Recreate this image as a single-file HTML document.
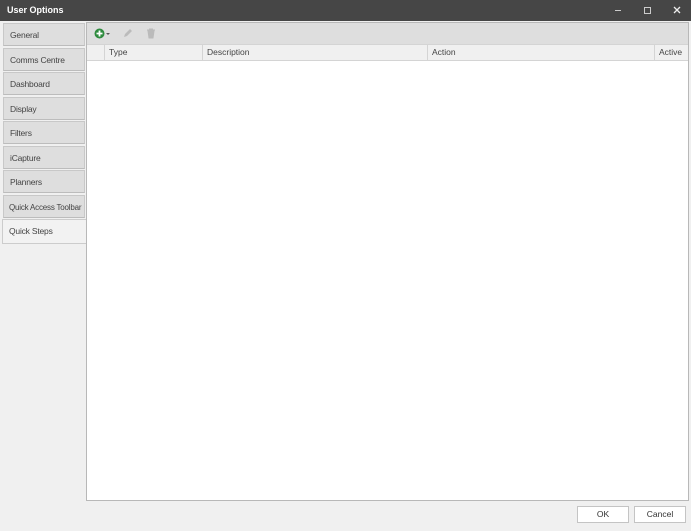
<!DOCTYPE html><html><head><style>
body{margin:0;width:691px;height:531px;background:#f0f0f0;font-family:"Liberation Sans",sans-serif;font-size:8.5px;color:#333;position:relative;overflow:hidden}
.title{position:absolute;left:0;top:0;width:691px;height:21px;background:#464646;color:#fff;font-weight:bold;font-size:9px;line-height:21px}
.title span{position:absolute;left:7px}
.tab{position:absolute;left:3px;width:82px;height:23px;background:#dedede;border:1px solid #c8c8c8;border-bottom-color:#bcbcbc;line-height:23px;padding-left:6px;box-sizing:border-box;color:#444;white-space:nowrap;overflow:hidden;letter-spacing:-0.2px}
.sel{background:#f2f2f2;left:2px;width:85px;border-color:#ccc}
.panel{position:absolute;left:86px;top:22px;width:603px;height:479px;border:1px solid #b8b8b8;box-sizing:border-box;background:#fff}
.tb{position:absolute;left:0;top:0;width:601px;height:21px;background:#dedede}
.hd{position:absolute;left:0;top:21px;width:601px;height:17px;background:#f0f0f0;border-bottom:1px solid #d4d4d4;border-top:1px solid #d4d4d4;box-sizing:border-box}
.c{position:absolute;top:0;height:16px;line-height:15px;border-left:1px solid #d4d4d4;padding-left:4px;box-sizing:border-box;color:#444}
.btn{position:absolute;top:506px;height:17px;background:#fff;border:1px solid #c4c4c4;box-sizing:border-box;text-align:center;line-height:15px;color:#333}
</style></head><body>
<div class="title"><span>User Options</span>
<svg style="position:absolute;left:614px;top:6px" width="70" height="9"><path d="M1 4.5h6" stroke="#ccc" stroke-width="1"/><rect x="30.5" y="1.5" width="6" height="6" fill="none" stroke="#ccc"/><path d="M60 1l6 6M66 1l-6 6" stroke="#eee" stroke-width="1.3"/></svg></div>
<div class="tab" style="top:23px">General</div>
<div class="tab" style="top:48px">Comms Centre</div>
<div class="tab" style="top:72px">Dashboard</div>
<div class="tab" style="top:97px">Display</div>
<div class="tab" style="top:121px">Filters</div>
<div class="tab" style="top:146px">iCapture</div>
<div class="tab" style="top:170px">Planners</div>
<div class="tab" style="top:195px;font-size:8px;padding-left:5px">Quick Access Toolbar</div>
<div class="tab sel" style="top:219px;height:25px">Quick Steps</div>
<div class="panel">
<div class="tb">
<svg style="position:absolute;left:7px;top:5px" width="20" height="11"><circle cx="5.5" cy="5.5" r="5" fill="#2e8b3e"/><path d="M5.5 2.5v6M2.5 5.5h6" stroke="#fff" stroke-width="1.8"/><path d="M12 5h4l-2 2z" fill="#555"/></svg>
<svg style="position:absolute;left:35px;top:5px" width="11" height="11"><path d="M2 9l1-3 5-5 2 2-5 5z" fill="#bbb"/></svg>
<svg style="position:absolute;left:59px;top:5px" width="10" height="11"><path d="M1 2h8M3 1h4M2 3h6l-1 7H3z" stroke="#bbb" fill="#bbb"/></svg>
</div>
<div class="hd">
<div class="c" style="left:0;width:18px;border-left:none"></div>
<div class="c" style="left:17px;width:98px">Type</div>
<div class="c" style="left:115px;width:225px">Description</div>
<div class="c" style="left:340px;width:227px">Action</div>
<div class="c" style="left:567px;width:34px">Active</div>
</div></div>
<div class="btn" style="left:577px;width:52px">OK</div>
<div class="btn" style="left:634px;width:52px">Cancel</div>
</body></html>
